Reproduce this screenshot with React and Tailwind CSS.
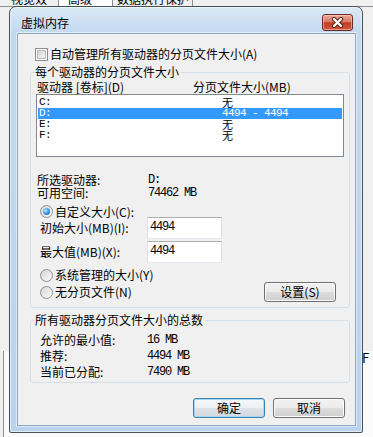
import React from 'react'

const Checkbox = () => (
  <span className="w-[13px] h-[13px] border border-[#8e8f8f] bg-white p-[1px] flex-shrink-0">
    <span className="block w-full h-full border border-[#b8bcc2] bg-[linear-gradient(135deg,#cfd3d8,#f5f6f7)]" />
  </span>
)

const Radio = ({ checked }) => (
  <span className="w-[13px] h-[13px] rounded-full border border-[#8e8f8f] bg-[linear-gradient(135deg,#d4d6d9,#fafafa)] flex items-center justify-center flex-shrink-0">
    {checked && (
      <span className="w-[7px] h-[7px] rounded-full bg-[radial-gradient(circle_at_35%_35%,#b9e6ff,#2e87d8_60%,#1b5f9c)]" />
    )}
  </span>
)

const WinButton = ({ children, primary }) => (
  <button
    type="button"
    className={
      primary
        ? 'w-[72px] h-[20px] rounded-[3px] border border-[#3c7fb1] bg-[linear-gradient(#f4f8fb,#ecf0f3_50%,#dde3e8_50%,#d2d9df)] shadow-[inset_0_0_0_1px_#a8d8f2] text-[12px] leading-none text-black flex items-center justify-center'
        : 'w-[72px] h-[20px] rounded-[3px] border border-[#707070] bg-[linear-gradient(#f2f2f2,#ebebeb_50%,#dddddd_50%,#cfcfcf)] shadow-[inset_0_0_0_1px_#fcfcfc] text-[12px] leading-none text-black flex items-center justify-center'
    }
  >
    {children}
  </button>
)

const rows = [
  { drive: 'C:', size: '无' },
  { drive: 'D:', size: '4494 - 4494', selected: true },
  { drive: 'E:', size: '无' },
  { drive: 'F:', size: '无' },
]

export default function App() {
  return (
    <div className="relative w-[373px] h-[437px] overflow-hidden bg-[#f0f0f0] font-['Noto_Sans_CJK_SC',sans-serif] text-black">
      {/* parent window, behind the dialog */}
      <div className="flex h-[7px] overflow-hidden border-b border-[#8e8f8f] text-[12px] leading-[14px]">
        <div className="ml-[3px] w-[56px] border-r border-[#8e8f8f] pl-[8px] -mt-[8px]">视觉效果</div>
        <div className="w-[54px] bg-white border-r border-[#8e8f8f] pl-[9px] -mt-[8px]">高级</div>
        <div className="w-[80px] border-r border-[#8e8f8f] pl-[4px] -mt-[8px]">数据执行保护</div>
      </div>
      <div className="ml-[3px] w-[380px] h-[413px] border-l border-b border-[#8e8f8f] bg-[#fbfbfb]">
        <div className="ml-[358px] mt-[344px] text-[13px] leading-[14px] text-black">F</div>
      </div>
      <div className="flex mt-[8px] text-[12px] leading-[20px]">
        <div className="ml-[117px] w-[75px] h-[22px] border border-[#707070] rounded-[3px] text-center">确定</div>
        <div className="ml-[6px] w-[72px] h-[22px] border border-[#707070] rounded-[3px] text-center">取消</div>
        <div className="ml-[22px] w-[72px] h-[22px] border border-[#707070] rounded-[3px] text-center">应用(A)</div>
      </div>

      {/* virtual memory dialog */}
      <div className="absolute left-[9px] top-[6px] w-[354px] h-[427px] rounded-t-[7px] rounded-b-[2px] border border-[#434f5d] bg-[linear-gradient(180deg,#dce9f6_0px,#c3d8ee_26px,#bad3ec_100%)] shadow-[inset_0_0_0_1px_rgba(255,255,255,0.6)] flex flex-col">
        {/* title bar */}
        <div className="h-[26px] flex items-start justify-between">
          <span className="ml-[11px] mt-[8px] text-[12px] leading-[16px]">虚拟内存</span>
          <button
            type="button"
            className="mt-[7px] mr-[9px] w-[31px] h-[17px] rounded-[3px] border border-[#6b2a20] bg-[linear-gradient(#eaa898,#d77a64_45%,#c23c22_52%,#d35a40)] shadow-[inset_0_0_0_1px_rgba(255,220,210,0.5)] flex items-center justify-center"
          >
            <svg width="13" height="11" viewBox="0 0 13 11">
              <path d="M3 2 L10 9 M10 2 L3 9" stroke="#5a1d14" strokeWidth="4.2" strokeLinecap="round" />
              <path d="M3 2 L10 9 M10 2 L3 9" stroke="#ffffff" strokeWidth="2.4" strokeLinecap="round" />
            </svg>
          </button>
        </div>

        {/* client area */}
        <div className="ml-[7px] w-[339px] h-[393px] border border-[#8ea6bf] bg-[#f0f0f0] shadow-[0_0_0_1px_rgba(255,255,255,0.5)] flex flex-col text-[12px]">
          <div className="mt-[12px] ml-[17px] h-[16px] flex items-center gap-[2px] leading-none">
            <Checkbox />
            <span>自动管理所有驱动器的分页文件大小(A)</span>
          </div>

          {/* per-drive group */}
          <fieldset className="mt-[2px] ml-[12px] w-[320px] border border-[#d5dfe5] rounded-[3px] px-[5px] pb-[5px]">
            <legend className="-ml-[1px] pr-[2px] text-[12px] leading-[16px]">每个驱动器的分页文件大小</legend>
            <div className="h-[14px] flex items-center leading-none">
              <span className="w-[157px] pl-[1px]">驱动器 [卷标](D)</span>
              <span>分页文件大小(MB)</span>
            </div>
            <div className="w-[308px] h-[63px] border border-[#828790] bg-white pt-[2px]">
              {rows.map((r) => (
                <div
                  key={r.drive}
                  className={`mx-[1px] h-[11px] flex items-center ${r.selected ? 'bg-[#3399ff] text-white' : ''}`}
                >
                  <span className="w-[184px] pl-[1px] font-['Liberation_Mono',monospace] text-[11px] tracking-[-0.6px] leading-none">
                    {r.drive}
                  </span>
                  {r.size === '无' ? (
                    <span className="text-[11px] leading-none">{r.size}</span>
                  ) : (
                    <span className="font-['Liberation_Mono',monospace] text-[11px] tracking-[-0.6px] leading-none">{r.size}</span>
                  )}
                </div>
              ))}
            </div>

            <div className="mt-[16px] h-[13px] flex items-center leading-none">
              <span className="w-[112px] pl-[1px]">所选驱动器:</span>
              <span className="font-['Liberation_Mono',monospace] text-[12px] tracking-[-1.2px]">D:</span>
            </div>
            <div className="h-[13px] flex items-center leading-none">
              <span className="w-[112px] pl-[1px]">可用空间:</span>
              <span className="font-['Liberation_Mono',monospace] text-[12px] tracking-[-1.2px]">74462 MB</span>
            </div>

            <div className="mt-[7px] h-[11px] pl-[4px] flex items-center gap-[2px] leading-none">
              <Radio checked />
              <span>自定义大小(C):</span>
            </div>
            <div className="h-[22px] flex items-center leading-none">
              <span className="w-[111px] pl-[4px]">初始大小(MB)(I):</span>
              <div className="w-[75px] h-[22px] border border-[#abadb3] border-l-[#e2e3ea] border-b-[#e3e9ef] border-r-[#dbdfe6] bg-white pl-[2px] pt-[4px] font-['Liberation_Mono',monospace] text-[12px] tracking-[-1.2px] leading-[11px]">
                4494
              </div>
            </div>
            <div className="mt-[2px] h-[22px] flex items-center leading-none">
              <span className="w-[111px] pl-[4px]">最大值(MB)(X):</span>
              <div className="w-[75px] h-[22px] border border-[#abadb3] border-l-[#e2e3ea] border-b-[#e3e9ef] border-r-[#dbdfe6] bg-white pl-[2px] pt-[4px] font-['Liberation_Mono',monospace] text-[12px] tracking-[-1.2px] leading-[11px]">
                4494
              </div>
            </div>

            <div className="mt-[5px] h-[14px] pl-[4px] flex items-center gap-[2px] leading-none">
              <Radio />
              <span>系统管理的大小(Y)</span>
            </div>
            <div className="h-[20px] pl-[4px] flex items-center justify-between leading-none">
              <div className="flex items-center gap-[2px]">
                <Radio />
                <span>无分页文件(N)</span>
              </div>
              <div className="mr-[8px]">
                <WinButton>设置(S)</WinButton>
              </div>
            </div>
          </fieldset>

          {/* totals group */}
          <fieldset className="mt-[4px] ml-[12px] w-[320px] border border-[#d5dfe5] rounded-[3px] px-[5px] pb-[2px]">
            <legend className="-ml-[1px] pr-[2px] text-[12px] leading-[16px]">所有驱动器分页文件大小的总数</legend>
            <div className="mt-[4px] h-[16px] flex items-center leading-none">
              <span className="w-[111px] pl-[4px]">允许的最小值:</span>
              <span className="font-['Liberation_Mono',monospace] text-[12px] tracking-[-1.2px]">16 MB</span>
            </div>
            <div className="h-[16px] flex items-center leading-none">
              <span className="w-[111px] pl-[4px]">推荐:</span>
              <span className="font-['Liberation_Mono',monospace] text-[12px] tracking-[-1.2px]">4494 MB</span>
            </div>
            <div className="h-[16px] flex items-center leading-none">
              <span className="w-[111px] pl-[4px]">当前已分配:</span>
              <span className="font-['Liberation_Mono',monospace] text-[12px] tracking-[-1.2px]">7490 MB</span>
            </div>
          </fieldset>

          <div className="mt-[15px] pr-[10px] flex justify-end gap-[8px]">
            <WinButton primary>确定</WinButton>
            <WinButton>取消</WinButton>
          </div>
        </div>
      </div>
    </div>
  )
}
